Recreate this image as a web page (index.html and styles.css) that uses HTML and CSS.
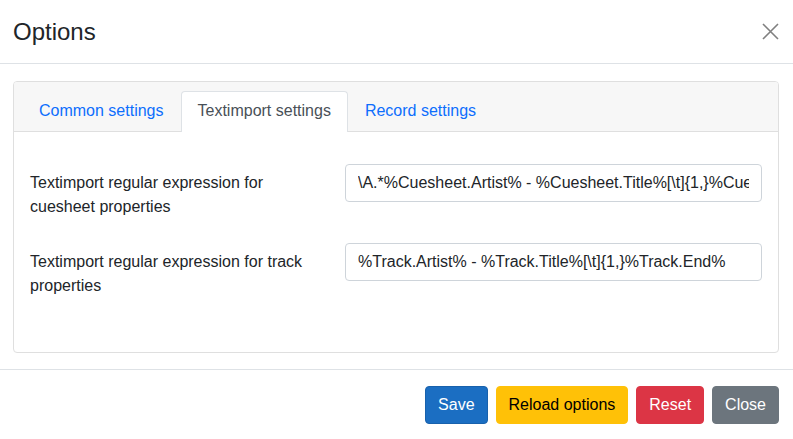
FILE: index.html
```html
<!DOCTYPE html>
<html>
<head>
<meta charset="utf-8">
<link rel="stylesheet" href="styles.css">
</head>
<body>
<div class="modal">
  <div class="modal-header">
    <h5 class="modal-title">Options</h5>
    <button class="btn-close" aria-label="Close">
      <svg width="17" height="17" viewBox="0 0 17 17"><path d="M1 1L16 16M16 1L1 16" stroke="#808080" stroke-width="1.6" fill="none"/></svg>
    </button>
  </div>
  <div class="modal-body">
    <div class="card">
      <div class="card-header">
        <ul class="tabs">
          <li><a class="tab">Common settings</a></li>
          <li><a class="tab active">Textimport settings</a></li>
          <li><a class="tab">Record settings</a></li>
        </ul>
      </div>
      <div class="card-body">
        <div class="form-row">
          <label class="form-label">Textimport regular expression for cuesheet properties</label>
          <input class="form-control" type="text" value="\A.*%Cuesheet.Artist% - %Cuesheet.Title%[\t]{1,}%Cuesheet.End%">
        </div>
        <div class="form-row">
          <label class="form-label">Textimport regular expression for track properties</label>
          <input class="form-control" type="text" value="%Track.Artist% - %Track.Title%[\t]{1,}%Track.End%">
        </div>
      </div>
    </div>
  </div>
  <div class="modal-footer">
    <button class="btn btn-primary">Save</button>
    <button class="btn btn-warning">Reload options</button>
    <button class="btn btn-danger">Reset</button>
    <button class="btn btn-secondary">Close</button>
  </div>
</div>
</body>
</html>
```
FILE: styles.css
```css
* { box-sizing: border-box; }
html, body { margin: 0; padding: 0; background: #fff; }
body {
  font-family: "Liberation Sans", Arial, sans-serif;
  font-size: 16px;
  line-height: 24px;
  color: #212529;
}
.modal { width: 793px; }
.modal-header {
  display: flex;
  align-items: center;
  justify-content: space-between;
  padding: 17px 13px;
  border-bottom: 1px solid #dee2e6;
}
.modal-title {
  margin: 0;
  font-size: 24px;
  line-height: 29px;
  font-weight: 400;
}
.btn-close {
  border: 0;
  background: transparent;
  padding: 0;
  width: 17px;
  height: 17px;
  margin-right: 1px;
  display: flex;
}
.modal-body { padding: 17px 14px 16px 13px; }
.card {
  border: 1px solid #dfdfdf;
  border-radius: 4px;
  overflow: hidden;
}
.card-header {
  background: #f7f7f7;
  padding: 9px 8px 0;
  border-bottom: 1px solid #dfdfdf;
}
.tabs {
  display: flex;
  list-style: none;
  margin: 0;
  padding: 0;
}
.tab {
  display: block;
  padding: 7px 16px 9px;
  border: 1px solid transparent;
  border-bottom: 0;
  border-radius: 4px 4px 0 0;
  color: #0d6efd;
  margin-bottom: -1px;
}
.tab.active {
  background: #fff;
  border-color: #dee2e6;
  color: #495057;
  height: 41px;
}
.card-body {
  padding: 32px 16px 47px;
  display: flex;
  flex-direction: column;
  gap: 17px;
}
.form-row {
  display: grid;
  grid-template-columns: 291px 1fr;
  column-gap: 24px;
  align-items: start;
}
.form-label {
  padding: 7px 0;
  line-height: 24px;
}
.form-control {
  height: 38px;
  width: 100%;
  padding: 6px 12px;
  font-family: inherit;
  font-size: 16px;
  line-height: 24px;
  color: #212529;
  border: 1px solid #ced4da;
  border-radius: 4px;
  background: #fff;
}
.modal-footer {
  border-top: 1px solid #dee2e6;
  display: flex;
  justify-content: flex-end;
  gap: 8px;
  padding: 16px 14px 15px;
}
.btn {
  font-family: inherit;
  font-size: 16px;
  line-height: 24px;
  padding: 6px 12px;
  border: 1px solid transparent;
  border-radius: 4px;
}
.btn-primary { background: #1b6ec2; border-color: #1861ac; color: #fff; }
.btn-warning { background: #ffc107; border-color: #ffc107; color: #000; }
.btn-danger { background: #dc3545; border-color: #dc3545; color: #fff; }
.btn-secondary { background: #6c757d; border-color: #6c757d; color: #fff; }
```
